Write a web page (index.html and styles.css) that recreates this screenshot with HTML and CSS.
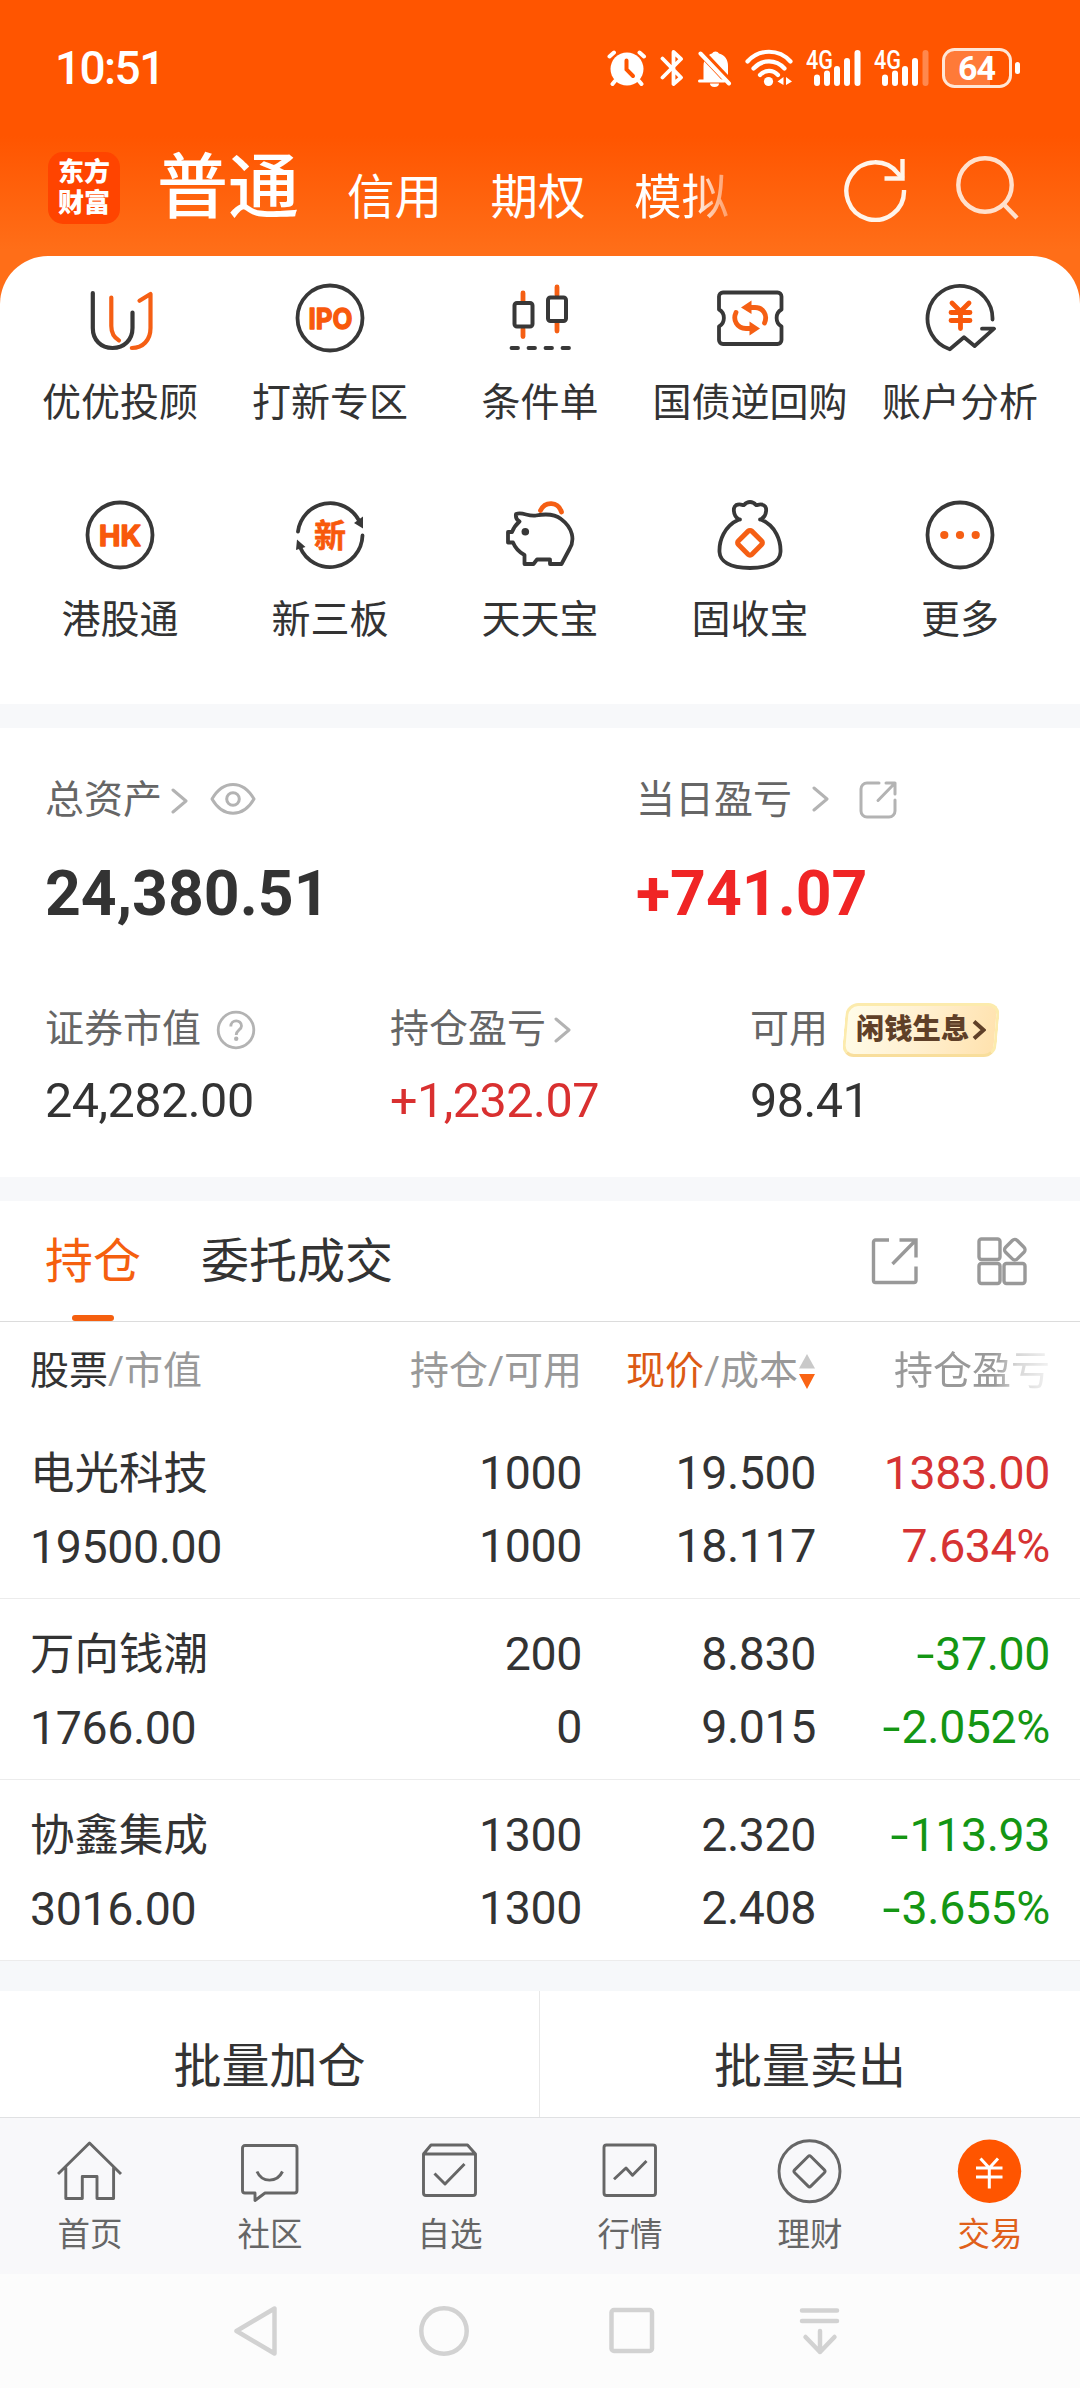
FILE: index.html
```html
<!DOCTYPE html>
<html lang="zh-CN">
<head>
<meta charset="utf-8">
<title>交易</title>
<link rel="stylesheet" href="styles.css">
</head>
<body>
<div class="app">
  <div class="statusbar">
    <span class="time">10:51</span>
    <div class="status-icons">
      <svg class="i-alarm" width="40" height="38" viewBox="0 0 40 38" fill="none" stroke="#fff" stroke-linecap="round">
        <circle cx="20" cy="20" r="16.5" fill="#fff" stroke="none"/>
        <path d="M2.5 7.500 7 3.500M37 7.500 32.500 3.500M8 32 5.500 35M32 32l2.500 3" stroke-width="4"/>
        <path d="M19.500 11.500V20.500L26 27" stroke="#ff5500" stroke-width="4"/>
      </svg>
      <svg class="i-bt" width="24" height="38" viewBox="0 0 24 38" fill="none" stroke="#fff" stroke-width="3.800" stroke-linecap="round" stroke-linejoin="round">
        <path d="M2.500 9.500 21 28.500 13.500 35V3L21 10 2.500 28.500"/>
      </svg>
      <svg class="i-bell" width="34" height="38" viewBox="0 0 34 38">
        <path d="M5.500 31V17C5.500 10 10 5.500 14 4.500a4 4 0 0 1 7 0C27 6 30 11 30 17v14z" fill="#fff"/>
        <path d="M0 0 34 36" stroke="#ff5500" stroke-width="8"/>
        <path d="M2.500 4.500 31 34.500" stroke="#fff" stroke-width="4" stroke-linecap="round"/>
        <path d="M1.500 32H26" stroke="#fff" stroke-width="3" stroke-linecap="round"/>
        <path d="M12 34.500h9a4.500 3.500 0 0 1-9 0z" fill="#fff"/>
      </svg>
      <svg class="i-wifi" width="48" height="38" viewBox="0 0 48 38" fill="none" stroke="#fff" stroke-width="4.200" stroke-linecap="round">
        <path d="M2.500 12.500C14-.5 34-.5 45.500 12.500M8.500 19.500C17 10 31 10 39.500 19.500M15 26c5-5.500 13-5.500 18 0"/>
        <circle cx="23.500" cy="32.500" r="4.600" fill="#fff" stroke="none"/>
        <path d="M38.500 29v8l-6-3.500zM41 29v8l6-3.500z" transform="translate(0 -1)" fill="#fff" stroke="none"/>
      </svg>
      <svg class="i-sig" width="55" height="46" viewBox="0 -4 55 46">
        <text x="0" y="20" font-size="25" font-weight="500" textLength="27" lengthAdjust="spacingAndGlyphs" class="svg-text" fill="#fff">4G</text>
        <path d="M11 28.500v5.500M21 24.500v9.500M31 20v14M41 12v22M51.500 4v30" stroke="#fff" stroke-width="6" stroke-linecap="round"/>
      </svg>
      <svg class="i-sig" width="55" height="46" viewBox="0 -4 55 46">
        <text x="0" y="20" font-size="25" font-weight="500" textLength="27" lengthAdjust="spacingAndGlyphs" class="svg-text" fill="#fff">4G</text>
        <path d="M11 28.500v5.500M21 24.500v9.500M31 20v14M41 12v22" stroke="#fff" stroke-width="6" stroke-linecap="round"/>
        <path d="M51.500 4v30" stroke="#fff" stroke-opacity=".3" stroke-width="6" stroke-linecap="round"/>
      </svg>
      <svg class="i-batt" width="78" height="40" viewBox="0 0 78 40">
        <path d="M12 2H48V38H12A10 10 0 0 1 2 28V12A10 10 0 0 1 12 2z" fill="#fff" fill-opacity=".22"/>
        <rect x="1.500" y="1.500" width="67" height="37" rx="11" fill="none" stroke="#ffe6d6" stroke-width="3"/>
        <rect x="73" y="14" width="5" height="12" rx="2.500" fill="#fff"/>
        <text x="35" y="32" font-size="34" font-weight="700" text-anchor="middle" textLength="38" class="svg-text" fill="#fff">64</text>
      </svg>
    </div>
  </div>

  <div class="topbar">
    <div class="logo"><span>东方</span><span>财富</span></div>
    <div class="modes">
      <span class="mode active">普通</span>
      <span class="mode">信用</span>
      <span class="mode">期权</span>
      <span class="mode fading">模拟</span>
    </div>
    <svg class="refresh" width="66" height="66" viewBox="0 0 66 66" fill="none" stroke="#fff4ea" stroke-width="4.400">
      <path d="M62 34A28.800 28.800 0 1 1 56 17.500L61 22.500"/><path d="M60.500 3V22.500H42.500"/>
    </svg>
    <svg class="search" width="66" height="66" viewBox="0 0 66 66" fill="none" stroke="#ffe0cc" stroke-width="4.400">
      <circle cx="30" cy="30" r="26.700"/><path d="M48.500 49 62 63"/>
    </svg>
  </div>

  <section class="features">
    <div class="feature">
      <svg width="72" height="72" viewBox="0 0 72 72" fill="none" stroke-width="4.200" stroke-linecap="round" stroke-linejoin="round">
        <path stroke="#f55f14" d="M27.300 15.500V44C27.300 51 30 55.500 35 58.500M55.500 18.700 66.500 12V46C66.500 58 59 66 47.800 66"/>
        <path stroke="#383838" d="M8.800 11V46C8.800 58 17 66 28.500 66S48.500 58 48.500 46V30.500"/>
      </svg>
      <span>优优投顾</span>
    </div>
    <div class="feature">
      <svg width="72" height="72" viewBox="0 0 72 72">
        <circle cx="36" cy="36" r="32.500" fill="none" stroke="#383838" stroke-width="3.800"/>
        <text x="14.500" y="46.500" font-size="29" textLength="44" lengthAdjust="spacingAndGlyphs" class="badge-text">IPO</text>
      </svg>
      <span>打新专区</span>
    </div>
    <div class="feature">
      <svg width="72" height="72" viewBox="0 0 72 72" fill="none" stroke-linecap="round">
        <path stroke="#f55f14" stroke-width="4.800" d="M19 11v8M19 47v7.500M53 5v8M53 41v8"/>
        <rect x="10.500" y="21" width="18" height="23.500" rx="2.500" stroke="#383838" stroke-width="4"/>
        <rect x="44" y="15.500" width="18" height="23.500" rx="2.500" stroke="#383838" stroke-width="4"/>
        <path stroke="#383838" stroke-width="3.800" d="M7.500 66h6.500M24.500 66H31M41.500 66H48M58.500 66H65"/>
      </svg>
      <span>条件单</span>
    </div>
    <div class="feature">
      <svg width="72" height="72" viewBox="0 0 72 72" fill="none" stroke-linejoin="round">
        <path stroke="#383838" stroke-width="3.800" d="M9 10.500H63.500A4 4 0 0 1 67.500 14.500V27.500C61 31 61 41 67.500 44.500V58A4 4 0 0 1 63.500 62H9A4 4 0 0 1 5 58V44.500C11.500 41 11.500 31 5 27.500V14.500A4 4 0 0 1 9 10.500z"/>
        <path stroke="#f55f14" stroke-width="4.800" stroke-linecap="round" d="M35 25.500H41C49 25.500 54 33 50.500 41M37 46.500H32C23 46.500 18.500 38 22 30.500"/>
        <path fill="#f55f14" d="M27 25.500 37.500 18.500V32zM46 46.500 35.500 39.500V53.500z"/>
      </svg>
      <span>国债逆回购</span>
    </div>
    <div class="feature">
      <svg width="72" height="72" viewBox="0 0 72 72" fill="none" stroke-linecap="round" stroke-linejoin="round">
        <path stroke="#383838" stroke-width="3.800" d="M68.500 37.500A32.500 32.500 0 1 0 25.800 67.300L40 55.300 50.600 64 70 46.700H58"/>
        <path stroke="#f8590c" stroke-width="4.800" d="M28 21 36.500 29.500 45 21M36.500 29.500V46.500M27 30.500H46M27 38.500H46"/>
      </svg>
      <span>账户分析</span>
    </div>
    <div class="feature">
      <svg width="72" height="72" viewBox="0 0 72 72">
        <circle cx="36" cy="36" r="32.500" fill="none" stroke="#383838" stroke-width="3.800"/>
        <text x="15" y="46.500" font-size="29" textLength="42" lengthAdjust="spacingAndGlyphs" class="badge-text">HK</text>
      </svg>
      <span>港股通</span>
    </div>
    <div class="feature">
      <svg width="72" height="72" viewBox="0 0 72 72" fill="none" stroke="#383838" stroke-width="3.800" stroke-linecap="round">
        <path d="M4 32.500A32.500 32.500 0 0 1 65 21.500M68.500 36.500A32.500 32.500 0 0 1 6 48"/>
        <path fill="#383838" stroke="none" d="M60 24 69 17.500V29.500zM3 40.500 11.500 48 2 51z"/>
        <text x="36" y="47.500" font-size="32" text-anchor="middle" class="badge-text cjk">新</text>
      </svg>
      <span>新三板</span>
    </div>
    <div class="feature">
      <svg width="72" height="72" viewBox="0 0 72 72" fill="none" stroke-linecap="round" stroke-linejoin="round">
        <path stroke="#383838" stroke-width="3.800" d="M12 15C19 12.500 24 18 32 16.500 40 15 50 14.500 57 20 69 29 71 41 65.500 50L57.500 65H46V60.500H33L29.500 65H20.500V56C15 53 11 48.500 9 43.500H4V33H8C9.500 29 11.500 26 15.500 22.500 12.500 21 11.500 18 12 15z"/>
        <path stroke="#f55f14" stroke-width="4.800" d="M36.500 11.500C41 2 54 2 57.500 13"/>
        <circle cx="21.300" cy="32.700" r="3.800" fill="#383838"/>
      </svg>
      <span>天天宝</span>
    </div>
    <div class="feature">
      <svg width="72" height="72" viewBox="0 0 72 72" fill="none" stroke-linecap="round" stroke-linejoin="round">
        <path stroke="#383838" stroke-width="3.800" d="M25 20.500C19 17 17.500 6 24.500 5.500 27 5 29 6.500 30 6 33.500 2 38.500 2 42 6 43 6.500 45 5 47.500 5.500 54.500 6 53 17 47 20.500 62 27 67 42 66.500 53 66 62 57 69 36 69S6 62 5.500 53C5 42 10 27 25 20.500zM24 20.500h2M46 20.500h2"/>
        <rect x="26.500" y="34.300" width="19" height="19" rx="2.500" transform="rotate(45 36 43.800)" stroke="#f55f14" stroke-width="5"/>
      </svg>
      <span>固收宝</span>
    </div>
    <div class="feature">
      <svg width="72" height="72" viewBox="0 0 72 72">
        <circle cx="36" cy="36" r="32.500" fill="none" stroke="#383838" stroke-width="3.800"/>
        <g fill="#f55f14"><circle cx="20.300" cy="36" r="4.100"/><circle cx="36" cy="36" r="4.100"/><circle cx="51.700" cy="36" r="4.100"/></g>
      </svg>
      <span>更多</span>
    </div>
  </section>

  <section class="assets">
    <div class="asset-row primary">
      <div class="asset">
        <div class="label">总资产
          <svg class="chev c1" width="17" height="26" viewBox="0 0 17 26"><path d="M2 2 15 13 2 24"/></svg>
          <svg class="eye" width="46" height="34" viewBox="0 0 46 34" fill="none" stroke="#b3b3b3" stroke-width="3"><path d="M2 17C13-2.500 33-2.500 44 17 33 36 13 36 2 17z" stroke-linejoin="round"/><circle cx="23" cy="17" r="6.300"/></svg>
        </div>
        <div class="value">24,380.51</div>
      </div>
      <div class="asset">
        <div class="label">当日盈亏
          <svg class="chev c2" width="17" height="26" viewBox="0 0 17 26"><path d="M2 2 15 13 2 24"/></svg>
          <svg class="share" width="40" height="40" viewBox="0 0 40 40" fill="none" stroke="#b3b3b3" stroke-width="3" stroke-linecap="round" stroke-linejoin="round"><path d="M21 3H9A6 6 0 0 0 3 9V31A6 6 0 0 0 9 37H31A6 6 0 0 0 37 31V20M28 3H37V14M37 3 20 20.500"/></svg>
        </div>
        <div class="value up">+741.07</div>
      </div>
    </div>
    <div class="asset-row secondary">
      <div class="asset">
        <div class="label">证券市值
          <svg class="help" width="40" height="40" viewBox="0 0 40 40"><circle cx="20" cy="20" r="17.800" fill="none" stroke="#b3b3b3" stroke-width="2.800"/><path d="M14.800 16.500C14.800 9 25.500 9 25.500 16 25.500 20 20.200 20 20.200 25" fill="none" stroke="#b3b3b3" stroke-width="2.800"/><circle cx="20.200" cy="28.800" r="2.200" fill="#b3b3b3"/></svg>
        </div>
        <div class="value">24,282.00</div>
      </div>
      <div class="asset">
        <div class="label">持仓盈亏
          <svg class="chev c3" width="17" height="26" viewBox="0 0 17 26"><path d="M2 2 15 13 2 24"/></svg>
        </div>
        <div class="value up">+1,232.07</div>
      </div>
      <div class="asset">
        <div class="label">可用
          <span class="promo">闲钱生息<svg width="14" height="20" viewBox="0 0 14 20"><path d="M2 1.500 11.500 10 2 18.500" fill="none" stroke="#5f4028" stroke-width="4"/></svg></span>
        </div>
        <div class="value">98.41</div>
      </div>
    </div>
  </section>

  <section class="holdings">
    <div class="tabs">
      <span class="tab active">持仓</span>
      <span class="tab">委托成交</span>
      <svg class="tool-export" width="50" height="50" viewBox="0 0 50 50" fill="none" stroke="#999" stroke-width="3.400"><path d="M20 4H6.500A2 2 0 0 0 4.500 6V44.500A2 2 0 0 0 6.500 46.500H45A2 2 0 0 0 47 44.500V30.500M30.500 4H47V21.500M47 4 23.500 28"/></svg>
      <svg class="tool-grid" width="50" height="50" viewBox="0 0 50 50" fill="none" stroke="#999" stroke-width="3.400"><rect x="2" y="3" width="21" height="20.500" rx="2.500"/><rect x="2" y="27.500" width="21" height="20" rx="2.500"/><rect x="27" y="27.500" width="21" height="20" rx="2.500"/><rect x="29.500" y="5.500" width="16.500" height="16.500" rx="3.500" transform="rotate(45 37.800 13.800)"/></svg>
    </div>
    <div class="row head">
      <span><b>股票</b>/市值</span>
      <span>持仓/可用</span>
      <span class="sorted"><em>现价</em>/成本<svg width="18" height="38" viewBox="0 0 18 38"><path d="M9 2 17 16.500H1z" fill="#c9c9c9"/><path d="M9 37 17 22H1z" fill="#fa6414"/></svg></span>
      <span class="fade-head">持仓盈亏</span>
    </div>
    <div class="row">
      <div><span class="name">电光科技</span><br>19500.00</div>
      <div>1000<br>1000</div>
      <div>19.500<br>18.117</div>
      <div class="gain">1383.00<br>7.634%</div>
    </div>
    <div class="row">
      <div><span class="name">万向钱潮</span><br>1766.00</div>
      <div>200<br>0</div>
      <div>8.830<br>9.015</div>
      <div class="loss"><i>-</i>37.00<br><i>-</i>2.052%</div>
    </div>
    <div class="row">
      <div><span class="name">协鑫集成</span><br>3016.00</div>
      <div>1300<br>1300</div>
      <div>2.320<br>2.408</div>
      <div class="loss"><i>-</i>113.93<br><i>-</i>3.655%</div>
    </div>
  </section>

  <div class="batch">
    <span>批量加仓</span>
    <span>批量卖出</span>
  </div>

  <nav class="tabbar">
    <div class="item">
      <svg width="66" height="66" viewBox="0 0 66 66"><path d="M1 36 32.500 5 64 36M8.800 29.500V60.500H25.300V38.500H40V60.500H56.600V29.500"/></svg>
      <span>首页</span>
    </div>
    <div class="item">
      <svg width="66" height="66" viewBox="0 0 66 66"><path d="M8 7.500H57.500A2.500 2.500 0 0 1 60 10V52.500A2.500 2.500 0 0 1 57.500 55H28L18 62.500V55H8A2.500 2.500 0 0 1 5.500 52.500V10A2.500 2.500 0 0 1 8 7.500zM20 33.500C25 45 40 45 45.500 33.500"/></svg>
      <span>社区</span>
    </div>
    <div class="item">
      <svg width="66" height="66" viewBox="0 0 66 66"><path d="M6.500 16 14 7H50.500L58.500 16V55A2.500 2.500 0 0 1 56 57.500H9A2.500 2.500 0 0 1 6.500 55V16H58.500M17.500 35.500 28 46 47.500 26"/></svg>
      <span>自选</span>
    </div>
    <div class="item">
      <svg width="66" height="66" viewBox="0 0 66 66"><rect x="7" y="7" width="51.500" height="50.500" rx="2.500"/><path d="M17 41.300 29 30 35.500 37.300 49.500 23"/></svg>
      <span>行情</span>
    </div>
    <div class="item">
      <svg width="66" height="66" viewBox="0 0 66 66"><circle cx="32.500" cy="33.300" r="30.500"/><rect x="21" y="21.800" width="23" height="23" rx="2" transform="rotate(45 32.500 33.300)"/></svg>
      <span>理财</span>
    </div>
    <div class="item current">
      <svg width="66" height="66" viewBox="0 0 66 66"><circle class="disc" cx="32.500" cy="33.300" r="31.700"/><path class="yen" d="M23.500 20.500 32.300 30 41 20.500M32.300 30V50.500M19 30H45.500M19 39H45.500"/></svg>
      <span>交易</span>
    </div>
  </nav>

  <div class="sysbar">
    <svg width="52" height="52" viewBox="0 0 52 52"><path d="M6.500 26 44.500 3.500V48.500z"/></svg>
    <svg width="52" height="52" viewBox="0 0 52 52"><circle cx="26" cy="26" r="22.700"/></svg>
    <svg width="52" height="52" viewBox="0 0 52 52"><rect x="5.500" y="5" width="40.500" height="41" rx="2.500"/></svg>
    <svg width="52" height="52" viewBox="0 0 52 52"><path d="M8 5.500H43M8 16H43M26 26V47M11.500 32 26 47 40.500 32"/></svg>
  </div>
</div>
</body>
</html>
```

FILE: styles.css
```css
* { box-sizing: border-box; }

body {
  margin: 0;
  font-family: Roboto, "Noto Sans CJK SC", sans-serif;
  color: #333;
}

svg { display: block; flex: none; }

.svg-text { font-family: Roboto, sans-serif; }

.app {
  width: 1080px;
  height: 2388px;
  display: flex;
  flex-direction: column;
  overflow: hidden;
  background: linear-gradient(#ff5500 0, #ff5500 136px, #ff6e18 250px, #ff6e18 320px, #fff 321px);
}

/* Status bar */
.statusbar {
  height: 136px;
  padding: 0 60px 0 55px;
  display: flex;
  align-items: center;
  justify-content: space-between;
  color: #fff;
}
.time { font-size: 46px; font-weight: 500; line-height: 56px; letter-spacing: -1.600px; }
.status-icons { display: flex; align-items: center; }
.i-bt { margin-left: 13px; }
.i-bell { margin-left: 14px; }
.i-wifi { margin-left: 13px; }
.i-sig { margin-left: 13px; }
.i-batt { margin-left: 13px; }

/* Title bar */
.topbar {
  height: 120px;
  padding: 16px 59px 0 48px;
  display: flex;
  align-items: flex-start;
  color: #fff;
}
.logo {
  width: 72px;
  height: 72px;
  padding-top: 5px;
  border-radius: 15px;
  background: #ff4400;
  display: flex;
  flex-direction: column;
  align-items: center;
  font-size: 26px;
  font-weight: 900;
  line-height: 31px;
}
.logo span { height: 31px; }
.modes {
  flex: 1;
  height: 74px;
  padding-left: 37px;
  display: flex;
  align-items: flex-end;
}
.mode { font-size: 47.500px; line-height: 56px; margin-right: 48.500px; }
.mode.active { font-size: 71px; line-height: 76px; margin-right: 48px; font-weight: 500; }
.fading {
  -webkit-mask-image: linear-gradient(90deg, #000 60%, rgba(0,0,0,.35) 100%);
  mask-image: linear-gradient(90deg, #000 60%, rgba(0,0,0,.35) 100%);
}
.refresh { margin: 4px 0 0; }
.search { margin: 3px 0 0 47px; }

/* Shortcuts */
.features {
  height: 448px;
  padding: 26px 15px 0;
  display: grid;
  grid-template-columns: repeat(5, 210px);
  grid-auto-rows: 144px;
  row-gap: 73px;
  align-content: start;
  border-radius: 48px 48px 0 0;
  background: #fff;
}
.feature {
  display: flex;
  flex-direction: column;
  align-items: center;
  gap: 25px;
  font-size: 39px;
  line-height: 48px;
  white-space: nowrap;
}
.badge-text {
  font-family: Inter, sans-serif;
  font-weight: 700;
  fill: #f8590c;
  stroke: #f8590c;
  stroke-width: 1.400;
  stroke-linejoin: round;
}
.badge-text.cjk { font-family: "Noto Sans CJK SC", sans-serif; stroke-width: .6; }

/* Assets */
.assets {
  height: 497px;
  padding: 47px 45px 0;
  border-top: 24px solid #f7f8fa;
  border-bottom: 24px solid #f7f8fa;
  background: #fff;
}
.asset-row { display: grid; }
.primary { grid-template-columns: 591px 1fr; }
.secondary { grid-template-columns: 345px 360px 1fr; margin-top: 78px; }
.label {
  height: 48px;
  padding-top: 2px;
  display: flex;
  align-items: center;
  font-size: 39px;
  line-height: 46px;
  color: #666;
  white-space: nowrap;
}
.primary .value { margin-top: 39px; font-size: 62.500px; font-weight: 700; line-height: 64px; }
.secondary .value { margin-top: 21px; font-size: 48.500px; line-height: 56px; letter-spacing: -.5px; }
.value.up { color: #d93030; }
.primary .value.up { color: #f02525; }
.chev { fill: none; stroke: #b3b3b3; stroke-width: 3; stroke-linecap: round; stroke-linejoin: round; }
.c1 { margin: 1px 0 0 9px; }
.c2 { margin: -2px 0 0 20px; }
.c3 { margin: 2px 0 0 8px; }
.eye { margin: -2px 0 0 22px; }
.share { margin: -1px 0 0 29px; }
.help { margin: 2px 0 0 15px; }
.promo {
  width: 158px;
  height: 54px;
  margin: 2px 0 0 14px;
  padding-left: 14px;
  display: flex;
  align-items: center;
  position: relative;
  z-index: 0;
  font-size: 28.300px;
  font-weight: 900;
  color: #5f4028;
}
.promo::before {
  content: "";
  position: absolute;
  inset: 0 2px;
  z-index: -1;
  border: 3px solid #fcebad;
  border-bottom-color: #f8de9c;
  border-radius: 12px;
  background: linear-gradient(100deg, #fffce8, #fff1d3 45%, #ffe2ae);
  transform: skewX(-5deg);
}
.promo svg { margin-left: 3px; }

/* Holdings */
.holdings { background: #fff; }
.tabs {
  height: 121px;
  padding: 0 53px 0 45px;
  display: flex;
  align-items: center;
  border-bottom: 1px solid #dcdcdc;
  font-size: 48px;
}
.tab { height: 120px; line-height: 122px; margin-right: 60px; }
.tab.active { color: #f55f0f; position: relative; }
.tab.active::after {
  content: "";
  position: absolute;
  left: 27px;
  bottom: 0;
  width: 42px;
  height: 6px;
  border-radius: 3px;
  background: #f55f0f;
}
.tool-export { margin-left: auto; }
.tool-grid { margin-left: 58px; }

.row {
  height: 181px;
  padding: 19px 30px 0;
  display: grid;
  grid-template-columns: 276px 276px 234px 234px;
  border-bottom: 1px solid #ececec;
  font-size: 46.500px;
  line-height: 73px;
  letter-spacing: -.4px;
  text-align: right;
  white-space: nowrap;
}
.row > :first-child { text-align: left; }
.row .name { font-size: 44.500px; letter-spacing: 0; }
.row i { display: inline-block; font-style: normal; transform: scaleX(1.400); margin-right: 4px; }
.gain { color: #d63333; }
.loss { color: #149614; }
.row.head {
  height: 96px;
  padding-top: 0;
  border-bottom: 0;
  font-size: 39px;
  line-height: 98px;
  letter-spacing: 0;
  color: #999;
}
.head b { font-weight: 400; color: #333; }
.head em { font-style: normal; color: #dc5a14; }
.sorted { display: flex; justify-content: flex-end; align-items: center; }
.fade-head {
  -webkit-mask-image: linear-gradient(90deg, #000 76%, rgba(0,0,0,.4) 86%, rgba(0,0,0,.12));
  mask-image: linear-gradient(90deg, #000 76%, rgba(0,0,0,.4) 86%, rgba(0,0,0,.12));
}

.batch {
  height: 156px;
  border-top: 30px solid #f6f8fa;
  display: grid;
  grid-template-columns: 1fr 1fr;
  background: #fff;
  overflow: hidden;
  text-align: center;
  font-size: 48px;
  line-height: 152px;
}
.batch span:first-child { border-right: 1px solid #e8e8e8; }

/* Bottom tabs */
.tabbar {
  height: 157px;
  padding-top: 20px;
  border-top: 1px solid #e0e1e3;
  display: grid;
  grid-template-columns: repeat(6, 180px);
  background: #f8f8fa;
}
.item {
  display: flex;
  flex-direction: column;
  align-items: center;
  gap: 10px;
  font-size: 32.500px;
  line-height: 42px;
  color: #666;
}
.item svg { fill: none; stroke: #666; stroke-width: 2.900; stroke-linejoin: round; }
.item.current { color: #e0601a; }
.item .disc { fill: #ff5500; stroke: none; }
.item .yen { stroke: #fff; stroke-width: 3; stroke-linejoin: miter; }

/* System navigation */
.sysbar {
  height: 114px;
  padding-left: 162px;
  display: grid;
  grid-template-columns: repeat(4, 188px);
  justify-items: center;
  align-items: center;
  background: #fcfcfc;
}
.sysbar svg { fill: none; stroke: #d2d2d2; stroke-width: 4.500; stroke-linecap: round; stroke-linejoin: round; }
```
